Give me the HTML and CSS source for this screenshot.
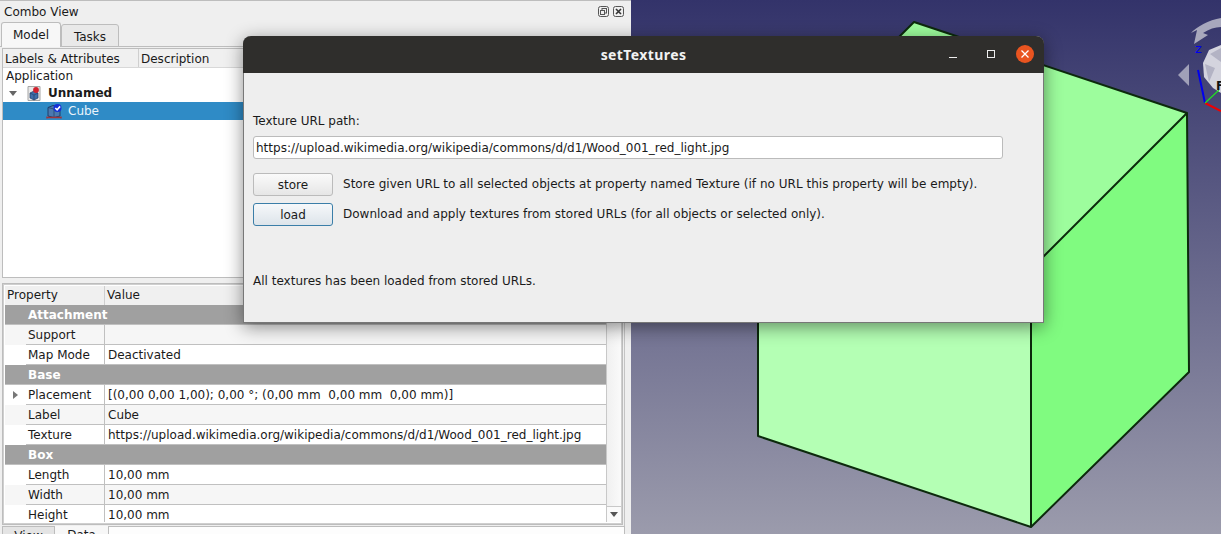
FILE: index.html
```html
<!DOCTYPE html>
<html lang="en">
<head>
<meta charset="utf-8">
<title>setTextures</title>
<link rel="stylesheet" href="styles.css">
</head>
<body>
<div class="app">
  <aside class="combo">
    <header class="combo-title">
      <span>Combo View</span>
      <span class="dock-btns">
        <svg class="dock-btn" viewBox="0 0 11 11"><rect x=".5" y=".5" width="10" height="10" rx="2" fill="none" stroke="#555"/><rect x="4" y="2.500" width="4.500" height="4.500" fill="none" stroke="#555"/><rect x="2.500" y="4.500" width="4" height="4" fill="#eee" stroke="#555"/></svg>
        <svg class="dock-btn" viewBox="0 0 11 11"><rect x=".5" y=".5" width="10" height="10" rx="2" fill="none" stroke="#555"/><path d="M3 3l5 5M8 3l-5 5" stroke="#333" stroke-width="1.600"/></svg>
      </span>
    </header>
    <nav class="tabs">
      <span class="tab tab-active">Model</span>
      <span class="tab">Tasks</span>
    </nav>
    <section class="pane">
      <div class="tree">
        <div class="tree-head">
          <span class="th th-labels">Labels &amp; Attributes</span>
          <span class="th">Description</span>
        </div>
        <div class="tree-row tree-app">Application</div>
        <div class="tree-row tree-doc">
          <span class="arrow-down"></span>
          <svg class="doc-icon" viewBox="0 0 14 15"><path d="M1 .5h12v14H1z" fill="#e8e8e8" stroke="#a5a5a5"/><path d="M3 7l4-2 4 2v5l-4 2-4-2z" fill="#3f6ea8" stroke="#1d3b66" stroke-width=".7"/><path d="M3 7l4 2 4-2M7 9v5" fill="none" stroke="#1d3b66" stroke-width=".6"/><circle cx="9" cy="4" r="2.900" fill="#d0202c"/></svg>
          <b>Unnamed</b>
        </div>
        <div class="tree-row tree-sel">
          <svg class="cube-icon" viewBox="0 0 17 15"><path d="M2 3.500l5-2 7 1.500v9l-6 1.500-6-1.500z" fill="#4a79b0" stroke="#203f6b"/><path d="M8 5v8M2 3.500l6 1.500 6-2" fill="none" stroke="#203f6b" stroke-width=".7"/><path d="M1 12.500v2M15 12.500v2M1 13.500h14" fill="none" stroke="#a0343c" stroke-width="1.400"/><circle cx="11.500" cy="4" r="4" fill="#1430d8"/><path d="M9.300 4l1.800 1.800 3-3.400" fill="none" stroke="#fff" stroke-width="1.600"/></svg>
          <span>Cube</span>
        </div>
      </div>
      <div class="props">
        <div class="prop-table">
          <div class="prop-head"><span class="ph ph-name">Property</span><span class="ph">Value</span></div>
          <div class="group">Attachment</div>
          <div class="row alt"><span class="name">Support</span><span class="val"></span></div>
          <div class="row"><span class="name">Map Mode</span><span class="val">Deactivated</span></div>
          <div class="group">Base</div>
          <div class="row"><span class="name"><i class="arrow-right"></i>Placement</span><span class="val">[(0,00 0,00 1,00); 0,00 °; (0,00 mm&nbsp; 0,00 mm&nbsp; 0,00 mm)]</span></div>
          <div class="row alt"><span class="name">Label</span><span class="val">Cube</span></div>
          <div class="row"><span class="name">Texture</span><span class="val">https://upload.wikimedia.org/wikipedia/commons/d/d1/Wood_001_red_light.jpg</span></div>
          <div class="group">Box</div>
          <div class="row"><span class="name">Length</span><span class="val">10,00 mm</span></div>
          <div class="row alt"><span class="name">Width</span><span class="val">10,00 mm</span></div>
          <div class="row"><span class="name">Height</span><span class="val">10,00 mm</span></div>
        </div>
        <div class="scrollbar"><span class="scroll-down"></span></div>
      </div>
    </section>
    <footer class="bottom-tabs">
      <span class="btab btab-off">View</span>
      <span class="btab">Data</span>
      <span class="btab-field"></span>
    </footer>
  </aside>
  <main class="viewport">
    <svg class="scene" viewBox="0 0 590 534" width="590" height="534">
      <defs>
        <linearGradient id="bg" x1="0" y1="0" x2="0" y2="1">
          <stop offset="0" stop-color="#33336a"/>
          <stop offset="1" stop-color="#9b9bac"/>
        </linearGradient>
      </defs>
      <rect width="590" height="534" fill="url(#bg)"/>
      <path d="M283 22L556 113L400 269L127 178Z" fill="#9dfd9d"/>
      <path d="M127 178L400 269V527L127 436Z" fill="#b4ffb4"/>
      <path d="M556 113L558 372L400 527V269Z" fill="#80fb80"/>
      <path d="M283 22L556 113L558 372L400 527L127 436V178ZM400 269V527M400 269L556 113" fill="none" stroke="#0c2a0c" stroke-width="2" stroke-linejoin="round"/>
      <path d="M590 18C578 20 565 27 560 33L566 30L563 44L577 35L572 33C578 29 584 27 590 27Z" fill="#a8a8bd"/>
      <path d="M558 64L547 75L558 86Z" fill="#a0a0b8"/>
      <path d="M590 45L578 50L572 63L573 77L582 88L590 93Z" fill="#d4d4de"/>
      <path d="M590 48L579 54L590 62ZM574 64L584 68L578 82Z" fill="#b3b3c4"/>
      <text x="564" y="53" class="axis">z</text>
      <path d="M567 70L574 103" stroke="#0000ee" stroke-width="2"/>
      <path d="M574 103L590 111" stroke="#f00000" stroke-width="2"/>
      <path d="M574 103L588 90" stroke="#22e022" stroke-width="1.200"/>
      <text x="585" y="90" class="cube-face">Fr</text>
    </svg>
  </main>
  <section class="dialog">
    <header class="dialog-bar">
      <h1>setTextures</h1>
      <div class="win-btns">
        <span class="win-min"></span>
        <span class="win-max"></span>
        <span class="win-close"><svg viewBox="0 0 10 10" width="10" height="10"><path d="M1.500 1.500l7 7M8.500 1.500l-7 7" stroke="#fff" stroke-width="1.300"/></svg></span>
      </div>
    </header>
    <div class="dialog-body">
      <label class="url-label">Texture URL path:</label>
      <input class="url-input" type="text" value="https://upload.wikimedia.org/wikipedia/commons/d/d1/Wood_001_red_light.jpg">
      <div class="action action-store">
        <button class="btn" type="button">store</button>
        <span>Store given URL to all selected objects at property named Texture (if no URL this property will be empty).</span>
      </div>
      <div class="action action-load">
        <button class="btn btn-focus" type="button">load</button>
        <span>Download and apply textures from stored URLs (for all objects or selected only).</span>
      </div>
      <p class="status">All textures has been loaded from stored URLs.</p>
    </div>
  </section>
</div>
</body>
</html>
```
FILE: styles.css
```css
* { box-sizing: border-box; }
html, body { margin: 0; height: 100%; overflow: hidden; }
body { font: 12px/17px "DejaVu Sans", sans-serif; color: #1a1a1a; background: #efefef; }
.app { display: flex; width: 1221px; height: 534px; position: relative; overflow: hidden; }

.combo { width: 631px; flex: none; display: flex; flex-direction: column; background: #efefef; border-top: 1px solid #bdbdbd; padding-right: 6px; }
.combo-title { height: 21px; flex: none; display: flex; justify-content: space-between; align-items: center; padding: 1px 1px 0 4px; }
.dock-btns { display: flex; gap: 4px; margin-top: -2px; }
.dock-btn { width: 11px; height: 11px; display: block; }

.tabs { display: flex; height: 25px; flex: none; padding-left: 1px; align-items: flex-end; margin-bottom: -1px; position: relative; z-index: 1; }
.tab { height: 23px; width: 58px; text-align: center; line-height: 24px; background: #e9e9e9; border: 1px solid #bdbdbd; border-radius: 3px 3px 0 0; }
.tab-active { height: 25px; width: 60px; background: #f7f7f7; border-bottom: 0; line-height: 24px; }

.pane { height: 480px; flex: none; border-top: 1px solid #bdbdbd; border-right: 1px solid #c4c4c4; padding: 1px 0 0 2px; display: flex; flex-direction: column; }
.tree { height: 230px; flex: none; background: #fff; border: 1px solid #bdbdbd; }
.tree-head { display: flex; height: 19px; background: #f0f0f0; border-bottom: 1px solid #d8d8d8; }
.th { padding: 2px 2px 0; }
.th-labels { width: 136px; border-right: 1px solid #cfcfcf; }
.tree-row { height: 17px; display: flex; align-items: center; padding-left: 3px; }
.tree-doc { padding-left: 6px; }
.tree-doc b { margin-left: 7px; }
.arrow-down { width: 0; height: 0; border: 4px solid transparent; border-top: 5px solid #666; border-bottom: 0; }
.doc-icon { width: 14px; height: 15px; margin-left: 10px; }
.tree-sel { height: 18px; background: #2f8bc6; color: #eaf4fb; padding-left: 43px; }
.tree-sel span { margin-left: 5px; }
.cube-icon { width: 17px; height: 15px; }

.props { margin-top: 5px; height: 242px; flex: none; width: 621px; display: flex; border: 1px solid #bdbdbd; outline: 1px solid #cfcfcf; outline-offset: -2px; padding: 2px 1px 2px 2px; background: #fff; }
.prop-table { flex: 1; min-width: 0; overflow: hidden; }
.prop-head { display: flex; height: 19px; background: #f0f0f0; }
.ph { padding: 1px 2px 0; }
.ph-name { width: 100px; border-right: 1px solid #cfcfcf; }
.group { height: 20px; background: #a0a0a0; color: #fff; font-weight: 700; padding: 2px 0 0 23px; border-bottom: 1px solid #c0c0c0; }
.row { display: flex; height: 20px; }
.row.alt { background: #f6f6f6; }
.name { width: 100px; flex: none; padding: 2px 0 0 23px; position: relative; border-right: 1px solid #c0c0c0; background-image: linear-gradient(#c0c0c0, #c0c0c0); background-size: calc(100% - 21px) 1px; background-position: 100% 100%; background-repeat: no-repeat; }
.val { flex: 1; padding: 2px 0 0 3px; border-bottom: 1px solid #c0c0c0; white-space: nowrap; }
.arrow-right { position: absolute; left: 8px; top: 6px; width: 0; height: 0; border: 4px solid transparent; border-left: 5px solid #777; border-right: 0; }
.scrollbar { width: 15px; flex: none; border-left: 1px solid #c8c8c8; background: linear-gradient(90deg, #f0f0f0, #fafafa); display: flex; align-items: flex-end; }
.scroll-down { width: 100%; height: 16px; border-top: 1px solid #c8c8c8; background: #fafafa; position: relative; }
.scroll-down::after { content: ""; position: absolute; left: 3px; top: 5px; border: 4px solid transparent; border-top: 5px solid #555; border-bottom: 0; }

.bottom-tabs { display: flex; height: 12px; padding-left: 2px; }
.btab { width: 53px; padding: 1px 0 0; text-align: center; background: #f7f7f7; }
.btab-off { background: #e4e4e4; border: 1px solid #bdbdbd; border-bottom: 0; }
.btab-field { flex: 1; background: #fdfdfd; border: 1px solid #bdbdbd; }

.viewport { flex: 1; min-width: 0; }
.scene { display: block; }
.axis { font: 400 13px "DejaVu Sans", sans-serif; fill: #0000ee; }
.cube-face { font: 700 12px "DejaVu Sans", sans-serif; fill: #111; }

.dialog { position: absolute; left: 243px; top: 36px; width: 801px; height: 287px; background: #eee; border-radius: 8px 8px 0 0; box-shadow: 0 4px 18px rgba(0,0,0,.45); display: flex; flex-direction: column; border: 1px solid #777; border-top: 0; }
.dialog-bar { height: 37px; flex: none; background: #2f2e2c; border-radius: 8px 8px 0 0; position: relative; display: flex; align-items: center; justify-content: center; margin: 0 -1px; }
.dialog-bar h1 { margin: 0; font: 700 14px "Noto Sans", sans-serif; color: #f2f2f2; letter-spacing: .4px; }
.win-btns { position: absolute; right: 10px; top: 9px; display: flex; align-items: center; }
.win-min { width: 8px; height: 1px; background: #eee; margin-top: 6px; margin-right: 30px; }
.win-max { width: 8px; height: 8px; border: 1px solid #eee; margin-right: 21px; }
.win-close { width: 18px; height: 18px; border-radius: 50%; background: #e95420; display: flex; align-items: center; justify-content: center; }
.dialog-body { padding: 40px 9px 0; flex: 1; display: flex; flex-direction: column; }
.url-label { height: 17px; display: block; }
.url-input { width: 750px; height: 23px; margin-top: 6px; padding: 0 2px; border: 1px solid #bbb; border-radius: 3px; background: #fff; font: 12px "DejaVu Sans", sans-serif; color: #1a1a1a; }
.action { display: flex; align-items: center; gap: 10px; margin-top: 14px; height: 23px; }
.action-store span { letter-spacing: .02px; }
.action-load { margin-top: 7px; }
.btn { width: 80px; height: 23px; padding: 0; border: 1px solid #bbb; border-radius: 3px; background: linear-gradient(#fafafa, #e6e6e6); font: 12px "DejaVu Sans", sans-serif; color: #1a1a1a; }
.btn-focus { border-color: #3b7ea8; background: linear-gradient(#f6f8fa, #dde4ea); }
.status { margin: 47px 0 0; }
```
